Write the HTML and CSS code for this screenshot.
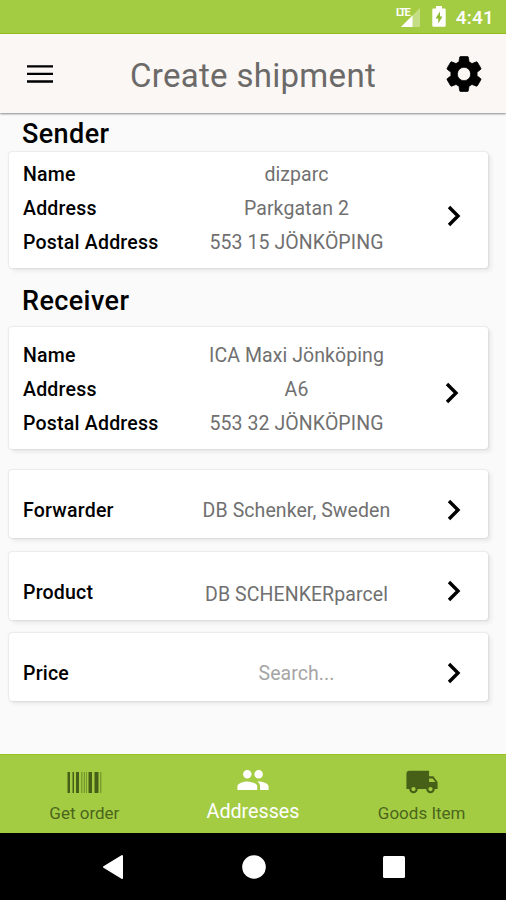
FILE: index.html
```html
<!DOCTYPE html>
<html lang="en">
<head>
<meta charset="utf-8">
<title>Create shipment</title>
<link rel="stylesheet" href="styles.css">
</head>
<body>
<div class="status">
  <svg class="signal" width="26" height="22" viewBox="0 0 26 22"><path d="M6 20 25 1V20Z" fill="#fff" opacity=".35"/><path d="M6 20 17.500 8.500V20Z" fill="#fff"/></svg>
  <span class="lte">LTE</span>
  <svg class="battery" width="14" height="21" viewBox="0 0 14 21"><path d="M4 0h6v2.500h2.500q1.200 0 1.200 1.200v15.800q0 1.200-1.200 1.200h-11Q.3 20.700.3 19.500V3.700q0-1.200 1.200-1.200H4Z" fill="#fff"/><path d="M8 5.500 3.500 12.500H6.300V17.500L10.500 10.500H8Z" fill="#8fb92f"/></svg>
  <span class="clock">4:41</span>
</div>
<header class="topbar">
  <svg class="menu" width="26" height="18" viewBox="0 0 26 18"><path d="M0 1.300H26M0 8.900H26M0 16.500H26" stroke="#000" stroke-width="2.300"/></svg>
  <h1>Create shipment</h1>
  <svg class="gear" width="42" height="42" viewBox="0 0 24 24"><path d="M19.430 12.980c.04-.32.07-.64.07-.98s-.03-.66-.07-.98l2.110-1.650c.19-.15.24-.42.12-.64l-2-3.460c-.12-.22-.39-.3-.61-.22l-2.490 1c-.52-.4-1.080-.73-1.690-.98l-.38-2.650A.49.49 0 0 0 14 2h-4c-.25 0-.46.18-.49.42l-.38 2.650c-.61.25-1.170.59-1.690.98l-2.490-1c-.23-.09-.49 0-.61.22l-2 3.460c-.13.22-.07.49.12.64l2.110 1.650c-.04.32-.07.65-.07.98s.03.66.07.98l-2.110 1.650c-.19.15-.24.42-.12.64l2 3.460c.12.22.39.3.61.22l2.490-1c.52.4 1.080.73 1.690.98l.38 2.650c.03.24.24.42.49.42h4c.25 0 .46-.18.49-.42l.38-2.650c.61-.25 1.170-.59 1.690-.98l2.490 1c.23.09.49 0 .61-.22l2-3.460c.12-.22.07-.49-.12-.64zM12 15.800a3.800 3.800 0 1 1 0-7.600 3.800 3.800 0 0 1 0 7.600z" stroke="#000" stroke-width=".4"/></svg>
</header>
<main>
  <h2>Sender</h2>
  <section class="card sender">
    <dl>
      <dt>Name</dt><dd>dizparc</dd>
      <dt>Address</dt><dd>Parkgatan 2</dd>
      <dt>Postal Address</dt><dd>553 15 JÖNKÖPING</dd>
    </dl>
    <svg class="chevron" width="14" height="22" viewBox="0 0 14 22"><path d="M2 2 11 11 2 20"/></svg>
  </section>
  <h2 class="second">Receiver</h2>
  <section class="card receiver">
    <dl>
      <dt>Name</dt><dd>ICA Maxi Jönköping</dd>
      <dt>Address</dt><dd>A6</dd>
      <dt>Postal Address</dt><dd>553 32 JÖNKÖPING</dd>
    </dl>
    <svg class="chevron" width="14" height="22" viewBox="0 0 14 22"><path d="M2 2 11 11 2 20"/></svg>
  </section>
  <section class="card single forwarder">
    <dl><dt>Forwarder</dt><dd>DB Schenker, Sweden</dd></dl>
    <svg class="chevron" width="14" height="22" viewBox="0 0 14 22"><path d="M2 2 11 11 2 20"/></svg>
  </section>
  <section class="card single product">
    <dl><dt>Product</dt><dd>DB SCHENKERparcel</dd></dl>
    <svg class="chevron" width="14" height="22" viewBox="0 0 14 22"><path d="M2 2 11 11 2 20"/></svg>
  </section>
  <section class="card single price">
    <dl><dt>Price</dt><dd class="hint">Search...</dd></dl>
    <svg class="chevron" width="14" height="22" viewBox="0 0 14 22"><path d="M2 2 11 11 2 20"/></svg>
  </section>
</main>
<nav class="tabs">
  <div class="tab">
    <svg width="36" height="32" viewBox="0 0 36 32"><path d="M1.500 6H4v21H1.500zM6.500 6H8v21H6.500zM10 6h3v21h-3zM22.500 6H26v21h-3.500zM28.500 6h4v21h-4z"/><path d="M15.300 6h1v21h-1zM17.800 6h1v21h-1zM20 6h.8v21H20zM34.300 6h1v21h-1z" opacity=".6"/></svg>
    <span>Get order</span>
  </div>
  <div class="tab active">
    <svg width="34" height="34" viewBox="0 0 24 24"><path d="M16 11c1.660 0 2.990-1.340 2.990-3S17.660 5 16 5s-3 1.340-3 3 1.340 3 3 3zm-8 0c1.660 0 2.990-1.340 2.990-3S9.660 5 8 5 5 6.340 5 8s1.340 3 3 3zm0 2c-2.330 0-7 1.170-7 3.500V19h14v-2.500C15 14.170 10.330 13 8 13zm8 0c-.29 0-.62.02-.97.05 1.160.84 1.970 1.970 1.970 3.450V19h6v-2.500c0-2.330-4.670-3.500-7-3.500z"/></svg>
    <span>Addresses</span>
  </div>
  <div class="tab">
    <svg width="34" height="34" viewBox="0 0 24 24"><path d="M20 8h-3V4H3c-1.100 0-2 .9-2 2v11h2c0 1.660 1.340 3 3 3s3-1.340 3-3h6c0 1.660 1.340 3 3 3s3-1.340 3-3h2v-5l-3-4zM6 18.500a1.500 1.500 0 1 1 0-3 1.500 1.500 0 0 1 0 3zm13.500-9 1.960 2.500H17V9.500h2.500zm-1.500 9a1.500 1.500 0 1 1 0-3 1.500 1.500 0 0 1 0 3z"/></svg>
    <span>Goods Item</span>
  </div>
</nav>
<footer class="system">
  <svg width="22" height="26" viewBox="0 0 22 26"><path d="M20 2V24L2 13Z" fill="#fff" stroke="#fff" stroke-width="2" stroke-linejoin="round"/></svg>
  <svg width="24" height="24" viewBox="0 0 24 24"><circle cx="12" cy="12" r="11.800" fill="#fff"/></svg>
  <svg width="22" height="22" viewBox="0 0 22 22"><rect width="22" height="22" rx="1.500" fill="#fff"/></svg>
</footer>
</body>
</html>
```
FILE: styles.css
```css
* { box-sizing: border-box; }
body {
  margin: 0;
  width: 506px;
  height: 900px;
  display: flex;
  flex-direction: column;
  overflow: hidden;
  background: #fafafa;
  color: #000;
  font-family: Roboto, "Liberation Sans", sans-serif;
}
svg { display: block; flex: none; }
.status {
  position: relative;
  height: 34px;
  flex: none;
  display: flex;
  align-items: center;
  justify-content: flex-end;
  padding-right: 12px;
  background: #a4cc43;
  border-bottom: 1px solid #97c21c;
  color: #fff;
}
.signal { margin: 2px 11px 0 0; }
.lte {
  position: absolute;
  left: 396px;
  top: 7px;
  font-size: 11px;
  line-height: 11px;
  font-weight: 700;
  letter-spacing: -1.5px;
}
.battery { margin-right: 10px; }
.clock { font-size: 19px; font-weight: 500; line-height: 34px; margin-top: 2px; letter-spacing: .2px; }
.topbar {
  position: relative;
  height: 79px;
  flex: none;
  display: flex;
  align-items: center;
  padding: 0 21px 0 27px;
  background: #fbf7f4;
  box-shadow: 0 1px 2px rgba(0, 0, 0, .45);
}
.gear { margin-left: auto; }
h1 {
  margin: 4px 0 0 77px;
  font-size: 33px;
  font-weight: 400;
  line-height: 40px;
  color: #6b6a69;
  letter-spacing: .3px;
}
main { flex: 1; padding: 4px 18px 0 9px; min-height: 0; }
h2 {
  margin: 0 0 0 13px;
  height: 35px;
  line-height: 35px;
  font-size: 27px;
  font-weight: 500;
  letter-spacing: .4px;
}
h2.second { margin-top: 16px; height: 43px; }
.card {
  display: flex;
  align-items: center;
  background: #fff;
  border-radius: 3px;
  padding: 0 27px 0 14px;
  box-shadow: 0 0 2px rgba(0, 0, 0, .22), 3px 3px 4px rgba(0, 0, 0, .07);
}
.sender { height: 116px; }
.receiver { height: 122px; }
.single { height: 68px; }
.forwarder { margin-top: 21px; }
.product, .price { margin-top: 13.500px; }
dl {
  flex: 1;
  margin: 0;
  display: grid;
  grid-template-columns: 157px 233px;
  grid-auto-rows: 34px;
  line-height: 34px;
  font-size: 19.500px;
}
.sender dl { margin-top: -3px; }
.receiver dl { margin-top: 4px; }
.single dl { margin-top: 14px; }
dt { font-weight: 500; white-space: nowrap; letter-spacing: .22px; }
dd { margin: 0; text-align: center; color: #707070; white-space: nowrap; letter-spacing: .08px; }
dd.hint { color: #a5a5a5; }
.product dd { padding-top: 2px; }
.chevron { fill: none; stroke: #000; stroke-width: 3.400; margin-top: 12px; }
.product .chevron { margin-top: 11px; }
.receiver .chevron { margin-top: 10px; margin-right: 2px; }
.tabs {
  height: 79px;
  flex: none;
  display: flex;
  background: #a4cc43;
  border-top: 1px solid #97c21c;
}
.tab {
  flex: 1;
  display: flex;
  flex-direction: column;
  align-items: center;
  justify-content: flex-start;
  height: 78px;
  padding-top: 10px;
  color: #4b661c;
  fill: #466018;
  font-size: 17px;
}
.tab svg { height: 34px; }
.tab span { line-height: 28px; }
.tab.active { color: #fff; fill: #fff; font-size: 19.700px; padding-top: 8px; }
.tab.active span { line-height: 30px; }
.system {
  height: 67px;
  flex: none;
  display: flex;
  align-items: center;
  justify-content: space-between;
  padding: 0 101px 0 102px;
  background: #000;
}
```
